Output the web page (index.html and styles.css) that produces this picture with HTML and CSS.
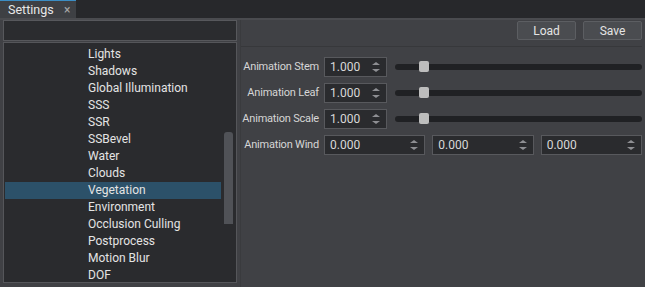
FILE: index.html
```html
<!DOCTYPE html>
<html lang="en">
<head>
    <meta charset="UTF-8">
    <title>Settings</title>
    <link rel="stylesheet" href="styles.css">
</head>
<body>
    <div class="tabbar">
        <div class="tab">Settings <span class="close">&times;</span></div>
    </div>
    <div class="main">
        <div class="left">
            <input class="search" type="text">
            <div class="tree">
                <div class="items">
                    <div class="item">Lights</div>
                    <div class="item">Shadows</div>
                    <div class="item">Global Illumination</div>
                    <div class="item">SSS</div>
                    <div class="item">SSR</div>
                    <div class="item">SSBevel</div>
                    <div class="item">Water</div>
                    <div class="item">Clouds</div>
                    <div class="item selected">Vegetation</div>
                    <div class="item">Environment</div>
                    <div class="item">Occlusion Culling</div>
                    <div class="item">Postprocess</div>
                    <div class="item">Motion Blur</div>
                    <div class="item">DOF</div>
                </div>
                <div class="scroll"><div class="thumb"></div></div>
            </div>
        </div>
        <div class="right">
            <div class="toolbar">
                <button>Load</button>
                <button>Save</button>
            </div>
            <div class="form">
                <label>Animation Stem</label>
                <div class="spin"><span>1.000</span><i class="arrows"></i></div>
                <div class="slider"><div class="handle"></div></div>

                <label>Animation Leaf</label>
                <div class="spin"><span>1.000</span><i class="arrows"></i></div>
                <div class="slider"><div class="handle"></div></div>

                <label>Animation Scale</label>
                <div class="spin"><span>1.000</span><i class="arrows"></i></div>
                <div class="slider"><div class="handle"></div></div>

                <label>Animation Wind</label>
                <div class="triple">
                    <div class="spin"><span>0.000</span><i class="arrows"></i></div>
                    <div class="spin"><span>0.000</span><i class="arrows"></i></div>
                    <div class="spin"><span>0.000</span><i class="arrows"></i></div>
                </div>
            </div>
        </div>
    </div>
</body>
</html>
```

FILE: styles.css
```css
body {
    margin: 0;
    background: #404145;
    font-family: Roboto, "Noto Sans", sans-serif;
    font-size: 12px;
    color: #dcdcdc;
    width: 645px;
    height: 287px;
    overflow: hidden;
}
.tabbar {
    height: 18px;
    background: #27282b;
    border-bottom: 2px solid #4a4b4f;
    display: flex;
}
.tab {
    width: 68px;
    padding-left: 8px;
    height: 17px;
    line-height: 18px;
    font-size: 12.5px;
    background: #3e4044;
    border-top: 1px solid #3b8dc4;
    color: #e8e8e8;
    position: relative;
}
.close {
    position: absolute;
    left: 64px;
    top: 0;
    font-size: 12px;
    color: #a8a8a8;
}
.main {
    display: flex;
    height: 267px;
}
.left {
    width: 234px;
    padding: 0 3px;
    display: flex;
    flex-direction: column;
}
.search {
    box-sizing: border-box;
    width: 234px;
    height: 21px;
    margin: 0 0 1px 0;
    background: #2b2c2f;
    border: 1px solid #57585c;
    outline: none;
}
.tree {
    box-sizing: border-box;
    height: 241px;
    background: #2a2b2e;
    border: 1px solid #55565a;
    display: flex;
    padding: 3px 3px 0 1px;
}
.items {
    flex: 1;
}
.item {
    height: 17px;
    line-height: 17px;
    padding-left: 83px;
    white-space: nowrap;
    color: #e4e4e4;
}
.item.selected {
    background: #2c5169;
}
.scroll {
    width: 9px;
    margin-left: 3px;
}
.thumb {
    margin-top: 86px;
    height: 92px;
    background: #505257;
    border-radius: 3px 3px 0 0;
}
.right {
    flex: 1;
    border-left: 1px solid #3a3b3e;
    padding-right: 3px;
}
.toolbar {
    display: flex;
    justify-content: flex-end;
    gap: 7px;
    padding: 1px 0 6px 0;
    border-bottom: 1px solid #37383b;
}
button {
    width: 59px;
    height: 19px;
    background: #4a4c50;
    border: 1px solid #5c5e62;
    border-radius: 2px;
    color: #e4e4e4;
    font-family: inherit;
    font-size: 12px;
    padding: 0;
}
.form {
    display: grid;
    grid-template-columns: 78px 63px 1fr;
    grid-auto-rows: 20px;
    column-gap: 5px;
    row-gap: 6px;
    padding-top: 10px;
}
.form label {
    display: flex;
    justify-content: flex-end;
    line-height: 20px;
    font-size: 11px;
    letter-spacing: -0.2px;
    color: #d6d6d6;
    white-space: nowrap;
}
.spin {
    box-sizing: border-box;
    height: 20px;
    background: #2a2b2e;
    border: 1px solid #58595d;
    line-height: 18px;
    padding-left: 5px;
    position: relative;
    color: #d8d8d8;
}
.arrows::before,
.arrows::after {
    content: "";
    position: absolute;
    right: 6px;
    border-left: 4px solid transparent;
    border-right: 4px solid transparent;
}
.arrows::before {
    top: 4px;
    border-bottom: 3px solid #8e8f93;
}
.arrows::after {
    bottom: 4px;
    border-top: 3px solid #8e8f93;
}
.slider {
    margin-left: 3px;
    display: flex;
    align-items: center;
    position: relative;
}
.slider::before {
    content: "";
    flex: 1;
    height: 6px;
    border-radius: 3px;
    background: #202124;
}
.handle {
    position: absolute;
    left: 24px;
    top: 4px;
    width: 10px;
    height: 11px;
    border-radius: 2px;
    background: #bdbdbd;
}
.triple {
    grid-column: 2 / 4;
    display: grid;
    grid-template-columns: 1fr 1fr 1fr;
    gap: 7px;
}
```
